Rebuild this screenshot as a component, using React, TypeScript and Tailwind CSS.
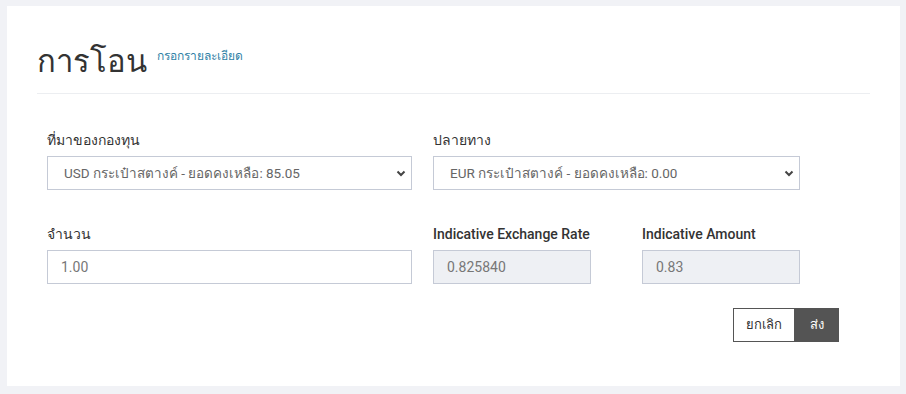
import React, { useState } from 'react';

const font = "font-['Roboto','Noto_Sans','DejaVu_Sans',sans-serif]";

const Chevron = () => (
  <svg width="12" height="12" viewBox="0 0 12 12" className="pointer-events-none absolute right-[4px] top-1/2 -translate-y-1/2">
    <path d="M2.5 4.5 L6 8 L9.5 4.5" fill="none" stroke="#444" strokeWidth="2" />
  </svg>
);

const Select = ({ value }: { value: string }) => (
  <div className="relative h-[34px] w-full border border-[#c5cad6] bg-white">
    <div className="flex h-full items-center pl-[16px] text-[13.5px] text-[#666]">{value}</div>
    <Chevron />
  </div>
);

export default function App() {
  const [amount, setAmount] = useState('1.00');

  return (
    <div className={`min-h-[394px] bg-[#f1f2f6] pl-[7px] pr-[6px] pt-[6px] pb-[8px] ${font}`}>
      <div className="h-[380px] bg-white px-[30px] pt-[37px]">
        <div className="flex items-start border-b border-[#eceef1] pb-[12px]">
          <h1 className="text-[31px] leading-[38px] text-[#333]">การโอน</h1>
          <span className="ml-[10px] mt-[4px] text-[12px] text-[#2f7fa6]">กรอกรายละเอียด</span>
        </div>

        <div className="px-[10px] pt-[36px]">
          <div className="flex gap-[21px]">
            <div className="w-[365px]">
              <div className="mb-[6px] text-[14px] leading-[20px] text-[#333]">ที่มาของกองทุน</div>
              <Select value="USD กระเป๋าสตางค์ - ยอดคงเหลือ: 85.05" />
            </div>
            <div className="w-[367px]">
              <div className="mb-[6px] text-[14px] leading-[20px] text-[#333]">ปลายทาง</div>
              <Select value="EUR กระเป๋าสตางค์ - ยอดคงเหลือ: 0.00" />
            </div>
          </div>

          <div className="mt-[34px] flex gap-[21px]">
            <div className="w-[365px]">
              <div className="mb-[6px] text-[14px] leading-[20px] text-[#333]">จำนวน</div>
              <input
                value={amount}
                onChange={e => setAmount(e.target.value)}
                className="h-[34px] w-full border border-[#c5cad6] bg-white pl-[13px] text-[14px] text-[#777] outline-none"
              />
            </div>
            <div className="flex w-[367px] gap-[51px]">
              <div className="w-[158px]">
                <div className="mb-[6px] text-[14px] font-medium leading-[20px] text-[#333]">Indicative Exchange Rate</div>
                <div className="flex h-[34px] items-center border border-[#c5cad6] bg-[#eef0f4] pl-[13px] text-[14px] text-[#777]">0.825840</div>
              </div>
              <div className="w-[158px]">
                <div className="mb-[6px] text-[14px] font-medium leading-[20px] text-[#333]">Indicative Amount</div>
                <div className="flex h-[34px] items-center border border-[#c5cad6] bg-[#eef0f4] pl-[13px] text-[14px] text-[#777]">0.83</div>
              </div>
            </div>
          </div>

          <div className="mt-[24px] flex justify-end pr-[21px]">
            <button className="h-[34px] w-[62px] border border-[#555] bg-white text-[13px] text-[#333]">ยกเลิก</button>
            <button className="h-[34px] w-[44px] bg-[#545454] text-[13px] text-white">ส่ง</button>
          </div>
        </div>
      </div>
    </div>
  );
}
